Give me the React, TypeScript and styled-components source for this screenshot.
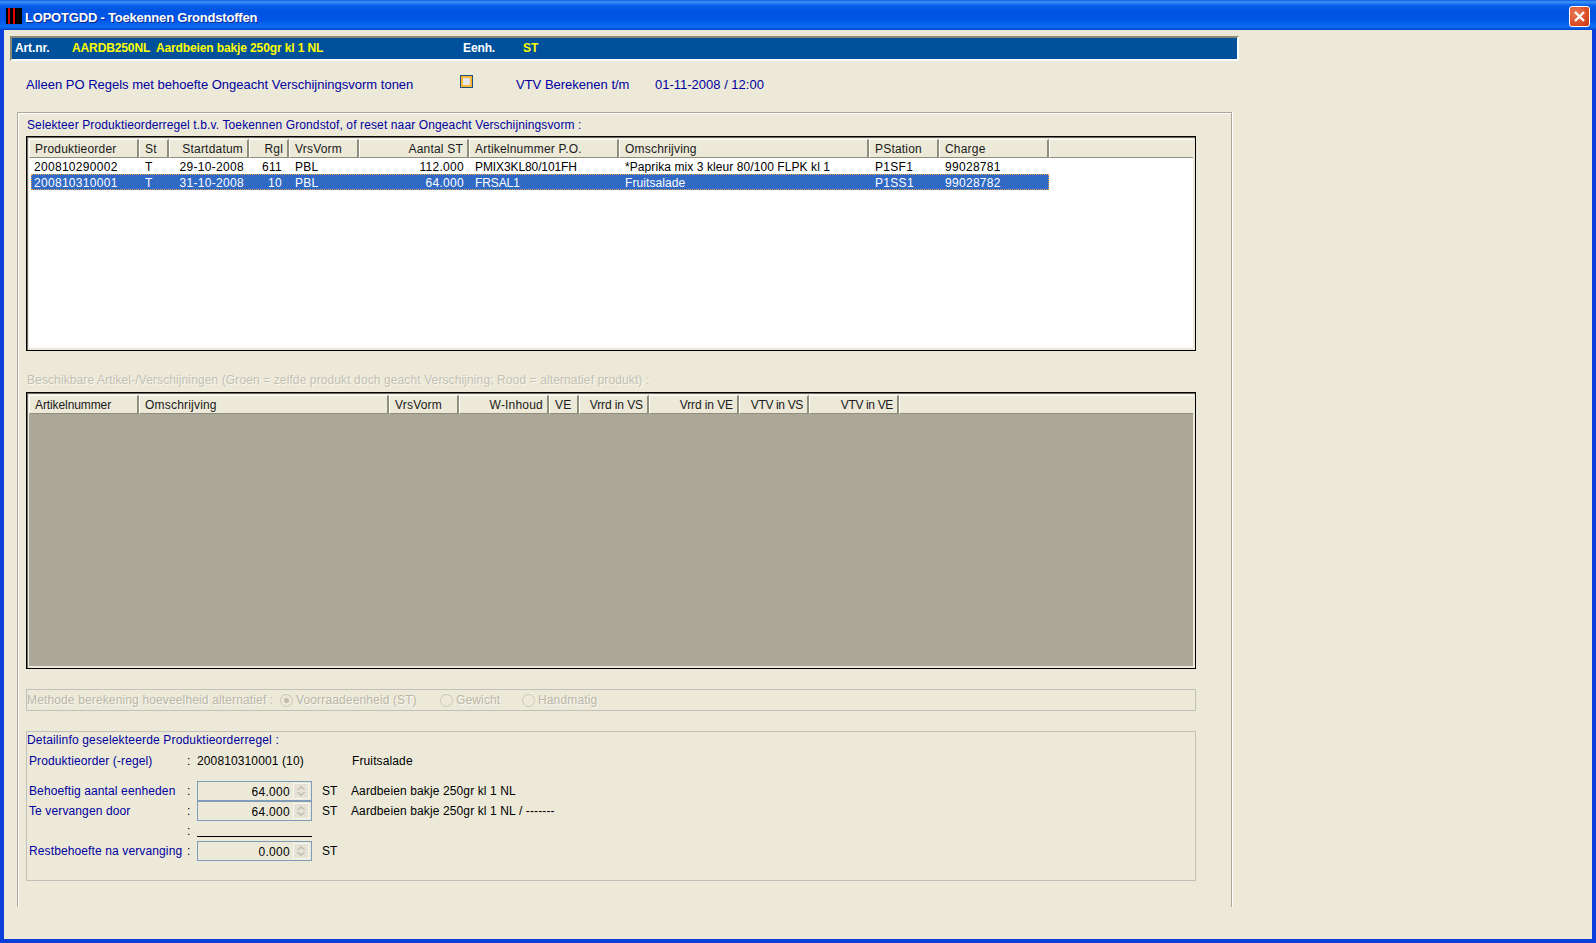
import React from 'react';
import styled, { createGlobalStyle } from 'styled-components';

const GlobalStyle = createGlobalStyle`
  html, body {
    margin: 0;
    padding: 0;
    height: 100%;
    overflow: hidden;
  }
  body {
    font-family: "Liberation Sans", Arial, sans-serif;
    font-size: 12px;
    background: #ece9d8;
  }
`;

const Window = styled.div`
  display: flex;
  flex-direction: column;
  width: 1596px;
  height: 943px;
`;

const TitleBar = styled.div`
  display: flex;
  align-items: center;
  flex: none;
  height: 30px;
  padding: 2px 6px 0;
  box-sizing: border-box;
  background: linear-gradient(
    180deg,
    #0a5fe0 0,
    #3f94f8 2px,
    #0a62ea 5px,
    #0054e2 10px,
    #0055e6 20px,
    #0a6cf4 26px,
    #0a62e8 28px,
    #0040c8 30px
  );
`;

const AppIcon = styled.svg`
  flex: none;
  width: 16px;
  height: 16px;
`;

const Title = styled.span`
  margin: 3px 0 0 3px;
  flex: 1;
  color: #fff;
  font-size: 13px;
  font-weight: bold;
  letter-spacing: -0.2px;
  text-shadow: 1px 1px 0 #0a2a90;
`;

const CloseButton = styled.div`
  display: flex;
  align-items: center;
  justify-content: center;
  width: 21px;
  height: 21px;
  box-sizing: border-box;
  border: 1px solid #fff;
  border-radius: 3px;
  background: radial-gradient(circle at 30% 30%, #e8795a, #d9471f 70%, #c23a18);
`;

const Body = styled.div`
  flex: 1;
  min-height: 0;
  box-sizing: border-box;
  padding: 6px 0 0 6px;
  background: #ece9d8;
  border-left: 4px solid #0a3fdc;
  border-right: 4px solid #0a3fdc;
  border-bottom: 4px solid #0a3fdc;
`;

const ArtBar = styled.div`
  display: flex;
  align-items: center;
  width: 1229px;
  height: 25px;
  box-sizing: border-box;
  padding: 0 0 2px 3px;
  background: #00519b;
  border: 2px solid #ece9d8;
  border-top-color: #8b8974;
  border-left-color: #8b8974;
  border-bottom-color: #fff;
  border-right-color: #fff;
  font-size: 12px;
  font-weight: bold;
  letter-spacing: -0.12px;
`;

const BarLabel = styled.span<{ $w: number }>`
  width: ${p => p.$w}px;
  flex: none;
  color: #fff;
`;

const BarValue = styled.span<{ $w?: number }>`
  color: #ffff00;
  flex: none;
  white-space: pre;
  ${p => (p.$w ? `width: ${p.$w}px;` : '')}
`;

const OptionRow = styled.div`
  display: flex;
  align-items: center;
  height: 20px;
  margin-top: 13px;
  padding-left: 16px;
  color: #0000a0;
  font-size: 13px;
`;

const OptionText = styled.span<{ $w: number }>`
  flex: none;
  width: ${p => p.$w}px;
  white-space: nowrap;
`;

const Check = styled.span`
  flex: none;
  width: 13px;
  height: 13px;
  box-sizing: border-box;
  margin: -5px 43px 0 0;
  border: 1px solid #1c5180;
  background: #e6e6e4;
  box-shadow: inset 0 0 0 2px #f8b636;
`;

const GroupFrame = styled.div`
  width: 1215px;
  height: 795px;
  box-sizing: border-box;
  margin: 18px 0 0 7px;
  padding: 5px 0 0 8px;
  border-top: 1px solid #aca899;
  border-left: 1px solid #aca899;
  border-right: 1px solid #aca899;
  box-shadow: inset 1px 1px 0 #fff, 1px 0 0 #fff;
`;

const BlueLabel = styled.div`
  height: 14px;
  line-height: 14px;
  padding-left: 1px;
  color: #0000a0;
  font-size: 12px;
  letter-spacing: 0.12px;
  white-space: nowrap;
`;

const GreyLabel = styled(BlueLabel)`
  margin-top: 22px;
  letter-spacing: 0.11px;
  color: #c3c0b2;
  text-shadow: 1px 1px 0 #f8f7f0;
`;

const Grid = styled.div<{ $h: number; $top: number }>`
  display: flex;
  flex-direction: column;
  width: 1170px;
  height: ${p => p.$h}px;
  box-sizing: border-box;
  margin-top: ${p => p.$top}px;
  padding: 2px;
  background: #ece9d8;
  border: 1px solid #000;
  box-shadow: inset 1px 1px 0 #716f64;
`;

const HeaderRow = styled.div`
  display: flex;
  flex: none;
  height: 19px;
  background: #ece9d8;
`;

const HeaderCell = styled.div<{ $w: number; $right?: boolean; $sp?: number }>`
  flex: none;
  width: ${p => p.$w}px;
  height: 19px;
  line-height: 18px;
  box-sizing: border-box;
  padding: 0 4px 0 5px;
  color: #1a1a1a;
  font-size: 12px;
  letter-spacing: ${p => p.$sp ?? 0.2}px;
  text-align: ${p => (p.$right ? 'right' : 'left')};
  white-space: nowrap;
  border-top: 1px solid #fff;
  border-left: 1px solid #fff;
  border-right: 2px solid #8f8d7c;
  border-bottom: 1px solid #8f8d7c;
`;

const HeaderFill = styled.div`
  flex: 1;
  height: 19px;
  box-sizing: border-box;
  border-top: 1px solid #fff;
  border-left: 1px solid #fff;
  border-bottom: 1px solid #8f8d7c;
`;

const Rows = styled.div`
  flex: 1;
  padding-left: 2px;
  background: #fff;
`;

const Row = styled.div<{ $selected?: boolean }>`
  display: flex;
  width: 1018px;
  height: 16px;
  box-sizing: border-box;
  line-height: 16px;
  color: ${p => (p.$selected ? '#fff' : '#000')};
  background: ${p => (p.$selected ? '#316ac5' : 'transparent')};
  border: 1px ${p => (p.$selected ? 'dotted #e8a050' : 'solid transparent')};
`;

const Cell = styled.div<{ $w: number; $right?: boolean; $first?: boolean; $sp?: number; $pr?: number }>`
  flex: none;
  width: ${p => p.$w}px;
  box-sizing: border-box;
  padding: 0 ${p => p.$pr ?? 7}px 0 ${p => (p.$first ? 2 : 4)}px;
  font-size: 12px;
  letter-spacing: ${p => p.$sp ?? 0.3}px;
  text-align: ${p => (p.$right ? 'right' : 'left')};
  white-space: nowrap;
  overflow: hidden;
`;

const EmptyArea = styled.div`
  flex: 1;
  background: #aca899;
`;

const MethodBox = styled.div`
  display: flex;
  align-items: center;
  width: 1170px;
  height: 22px;
  box-sizing: border-box;
  margin-top: 20px;
  border: 1px solid #c0c0bc;
  color: #b9b6a8;
  font-size: 12px;
  letter-spacing: 0.14px;
  text-shadow: 1px 1px 0 #f8f7f0;
  white-space: nowrap;
`;

const MethodTitle = styled.span`
  flex: none;
  width: 253px;
`;

const RadioOption = styled.span<{ $w: number }>`
  display: flex;
  align-items: center;
  flex: none;
  width: ${p => p.$w}px;
`;

const Radio = styled.span<{ $on?: boolean }>`
  display: flex;
  align-items: center;
  justify-content: center;
  flex: none;
  width: 13px;
  height: 13px;
  box-sizing: border-box;
  margin-right: 3px;
  border: 1px solid #cac8bb;
  border-radius: 50%;
  &::after {
    content: '';
    width: 5px;
    height: 5px;
    border-radius: 50%;
    background: ${p => (p.$on ? '#c0bdb0' : 'transparent')};
  }
`;

const DetailBox = styled.div`
  width: 1170px;
  height: 150px;
  box-sizing: border-box;
  margin-top: 20px;
  padding-top: 1px;
  border: 1px solid #c0c0bc;
`;

const DetailTitle = styled(BlueLabel)`
  padding-left: 0;
  letter-spacing: 0.17px;
`;

const DetailRow = styled.div<{ $top: number; $h: number }>`
  display: flex;
  align-items: center;
  height: ${p => p.$h}px;
  margin-top: ${p => p.$top}px;
  padding-left: 2px;
  font-size: 12px;
  letter-spacing: 0.12px;
  white-space: nowrap;
`;

const DetailLabel = styled.span`
  flex: none;
  width: 158px;
  color: #0000a0;
`;

const Colon = styled.span`
  flex: none;
  width: 10px;
  color: #000;
`;

const DetailText = styled.span<{ $w?: number }>`
  color: #000;
  flex: none;
  ${p => (p.$w ? `width: ${p.$w}px;` : '')}
`;

const NumberBox = styled.div`
  display: flex;
  align-items: center;
  justify-content: flex-end;
  flex: none;
  width: 115px;
  height: 20px;
  box-sizing: border-box;
  margin-right: 10px;
  padding-right: 2px;
  border: 1px solid #7f9db9;
  color: #000;
  letter-spacing: 0.3px;
`;

const NumberValue = styled.span`
  margin-top: 2px;
`;

const Spinner = styled.svg`
  flex: none;
  width: 16px;
  height: 16px;
  margin-left: 3px;
`;

const Rule = styled.div`
  flex: none;
  width: 115px;
  height: 1px;
  margin-top: 10px;
  background: #000;
`;

const poColumns = [
  { label: 'Produktieorder', w: 110 },
  { label: 'St', w: 30 },
  { label: 'Startdatum', w: 80, right: true },
  { label: 'Rgl', w: 40, right: true, pr: 9 },
  { label: 'VrsVorm', w: 70 },
  { label: 'Aantal ST', w: 110, right: true },
  { label: 'Artikelnummer P.O.', w: 150, sp: -0.1 },
  { label: 'Omschrijving', w: 250, sp: 0.08 },
  { label: 'PStation', w: 70 },
  { label: 'Charge', w: 110 },
];

const poRows = [
  ['200810290002', 'T', '29-10-2008', '611', 'PBL', '112.000', 'PMIX3KL80/101FH', '*Paprika mix 3 kleur 80/100 FLPK kl 1', 'P1SF1', '99028781'],
  ['200810310001', 'T', '31-10-2008', '10', 'PBL', '64.000', 'FRSAL1', 'Fruitsalade', 'P1SS1', '99028782'],
];

const artColumns = [
  { label: 'Artikelnummer', w: 110, sp: -0.1 },
  { label: 'Omschrijving', w: 250 },
  { label: 'VrsVorm', w: 70 },
  { label: 'W-Inhoud', w: 90, right: true },
  { label: 'VE', w: 30 },
  { label: 'Vrrd in VS', w: 70, right: true, sp: -0.1 },
  { label: 'Vrrd in VE', w: 90, right: true, sp: -0.1 },
  { label: 'VTV in VS', w: 70, right: true, sp: -0.35 },
  { label: 'VTV in VE', w: 90, right: true, sp: -0.35 },
];

function SpinnerIcon() {
  return (
    <Spinner viewBox="0 0 16 16">
      <rect x="0" y="0" width="16" height="16" fill="#f6f5ee" />
      <rect x="1" y="1" width="14" height="14" fill="#e6e3d6" />
      <path d="M8 2.5 L12.5 7 H10.5 L8 5 L5.5 7 H3.5 Z" fill="#c4c2b6" />
      <path d="M8 13.5 L3.5 9 H5.5 L8 11 L10.5 9 H12.5 Z" fill="#c4c2b6" />
    </Spinner>
  );
}

function NumberField({ value }: { value: string }) {
  return (
    <NumberBox>
      <NumberValue>{value}</NumberValue>
      <SpinnerIcon />
    </NumberBox>
  );
}

export default function App() {
  return (
    <Window>
      <GlobalStyle />
      <TitleBar>
        <AppIcon viewBox="0 0 16 16">
          <rect width="16" height="16" fill="#000" />
          <rect x="2" width="2" height="16" fill="#e00000" />
          <rect x="7" width="2" height="16" fill="#e00000" />
        </AppIcon>
        <Title>LOPOTGDD - Toekennen Grondstoffen</Title>
        <CloseButton>
          <svg width="15" height="15" viewBox="0 0 15 15">
            <path d="M3 3 L12 12 M12 3 L3 12" stroke="#fff" strokeWidth="2.4" />
          </svg>
        </CloseButton>
      </TitleBar>
      <Body>
        <ArtBar>
          <BarLabel $w={57}>Art.nr.</BarLabel>
          <BarValue $w={391}>AARDB250NL  Aardbeien bakje 250gr kl 1 NL</BarValue>
          <BarLabel $w={60}>Eenh.</BarLabel>
          <BarValue>ST</BarValue>
        </ArtBar>
        <OptionRow>
          <OptionText $w={434}>Alleen PO Regels met behoefte Ongeacht Verschijningsvorm tonen</OptionText>
          <Check />
          <OptionText $w={139}>VTV Berekenen t/m</OptionText>
          <OptionText $w={120}>01-11-2008 / 12:00</OptionText>
        </OptionRow>
        <GroupFrame>
          <BlueLabel>Selekteer Produktieorderregel t.b.v. Toekennen Grondstof, of reset naar Ongeacht Verschijningsvorm :</BlueLabel>
          <Grid $h={215} $top={4}>
            <HeaderRow>
              {poColumns.map(c => (
                <HeaderCell key={c.label} $w={c.w} $right={c.right}>{c.label}</HeaderCell>
              ))}
              <HeaderFill />
            </HeaderRow>
            <Rows>
              {poRows.map((r, i) => (
                <Row key={r[0]} $selected={i === 1}>
                  {r.map((v, j) => (
                    <Cell
                      key={j}
                      $w={j === 0 ? 109 : poColumns[j].w}
                      $first={j === 0}
                      $right={poColumns[j].right}
                      $sp={poColumns[j].sp}
                      $pr={poColumns[j].pr}
                    >
                      {v}
                    </Cell>
                  ))}
                </Row>
              ))}
            </Rows>
          </Grid>
          <GreyLabel>Beschikbare Artikel-/Verschijningen (Groen = zelfde produkt doch geacht Verschijning; Rood = alternatief produkt) :</GreyLabel>
          <Grid $h={277} $top={5}>
            <HeaderRow>
              {artColumns.map(c => (
                <HeaderCell key={c.label + c.w} $w={c.w} $right={c.right} $sp={c.sp}>{c.label}</HeaderCell>
              ))}
              <HeaderFill />
            </HeaderRow>
            <EmptyArea />
          </Grid>
          <MethodBox>
            <MethodTitle>Methode berekening hoeveelheid alternatief :</MethodTitle>
            <RadioOption $w={160}><Radio $on />Voorraadeenheid (ST)</RadioOption>
            <RadioOption $w={82}><Radio />Gewicht</RadioOption>
            <RadioOption $w={90}><Radio />Handmatig</RadioOption>
          </MethodBox>
          <DetailBox>
            <DetailTitle>Detailinfo geselekteerde Produktieorderregel :</DetailTitle>
            <DetailRow $top={6} $h={16}>
              <DetailLabel>Produktieorder (-regel)</DetailLabel>
              <Colon>:</Colon>
              <DetailText $w={155}>200810310001 (10)</DetailText>
              <DetailText>Fruitsalade</DetailText>
            </DetailRow>
            <DetailRow $top={12} $h={20}>
              <DetailLabel>Behoeftig aantal eenheden</DetailLabel>
              <Colon>:</Colon>
              <NumberField value="64.000" />
              <DetailText $w={29}>ST</DetailText>
              <DetailText>Aardbeien bakje 250gr kl 1 NL</DetailText>
            </DetailRow>
            <DetailRow $top={0} $h={20}>
              <DetailLabel>Te vervangen door</DetailLabel>
              <Colon>:</Colon>
              <NumberField value="64.000" />
              <DetailText $w={29}>ST</DetailText>
              <DetailText>Aardbeien bakje 250gr kl 1 NL / -------</DetailText>
            </DetailRow>
            <DetailRow $top={0} $h={20}>
              <DetailLabel />
              <Colon>:</Colon>
              <Rule />
            </DetailRow>
            <DetailRow $top={0} $h={20}>
              <DetailLabel>Restbehoefte na vervanging</DetailLabel>
              <Colon>:</Colon>
              <NumberField value="0.000" />
              <DetailText>ST</DetailText>
            </DetailRow>
          </DetailBox>
        </GroupFrame>
      </Body>
    </Window>
  );
}
